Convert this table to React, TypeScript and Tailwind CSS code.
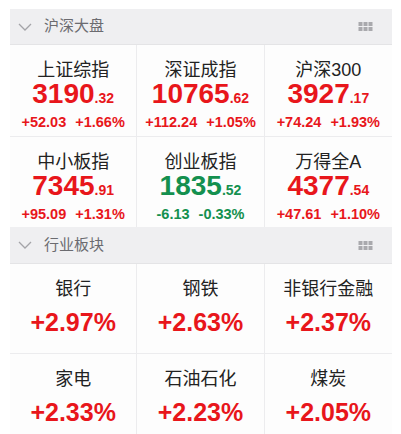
const font = "font-['Liberation_Sans','Noto_Sans_CJK_SC',sans-serif]"

type Index = { name: string; int: string; dec: string; chg: string; pct: string; up: boolean }

const indices: Index[] = [
  { name: '上证综指', int: '3190', dec: '.32', chg: '+52.03', pct: '+1.66%', up: true },
  { name: '深证成指', int: '10765', dec: '.62', chg: '+112.24', pct: '+1.05%', up: true },
  { name: '沪深300', int: '3927', dec: '.17', chg: '+74.24', pct: '+1.93%', up: true },
  { name: '中小板指', int: '7345', dec: '.91', chg: '+95.09', pct: '+1.31%', up: true },
  { name: '创业板指', int: '1835', dec: '.52', chg: '-6.13', pct: '-0.33%', up: false },
  { name: '万得全A', int: '4377', dec: '.54', chg: '+47.61', pct: '+1.10%', up: true },
]

const sectors = [
  { name: '银行', pct: '+2.97%' },
  { name: '钢铁', pct: '+2.63%' },
  { name: '非银行金融', pct: '+2.37%' },
  { name: '家电', pct: '+2.33%' },
  { name: '石油石化', pct: '+2.23%' },
  { name: '煤炭', pct: '+2.05%' },
]

function SectionHeader({ title, tall }: { title: string; tall?: boolean }) {
  return (
    <div className={`flex ${tall ? 'h-[37px]' : 'h-[36px]'} items-center border-b border-[#e4e4e6] bg-[#efeff1] pl-[8px] pr-[19px]`}>
      <svg width="14" height="8" viewBox="0 0 14 8" className="mr-[12px]">
        <polyline points="1,1 7,7 13,1" fill="none" stroke="#a4a4a8" strokeWidth="1.3" />
      </svg>
      <span className="text-[15px] text-[#6b6b70]">{title}</span>
      <svg width="15" height="9" viewBox="0 0 15 9" className="ml-auto">
        {[0, 5, 10].map((x) =>
          [0, 5].map((y) => <rect key={`${x}-${y}`} x={x + 0.5} y={y} width="4" height="4" fill="#a9a9ad" />)
        )}
      </svg>
    </div>
  )
}

export default function App() {
  return (
    <div className={`${font} h-[434px] w-[401px] overflow-hidden bg-white pl-[10px] pr-[9px] pt-[9px]`}>
      <SectionHeader title="沪深大盘" />
      <div className="grid grid-cols-3 bg-[#fdfdfd]">
        {indices.map((it, i) => (
          <div
            key={it.name}
            className={`flex flex-col items-center pt-[14px] ${i < 3 ? 'h-[92px] border-b' : 'h-[90px]'} border-[#ececee] ${i % 3 !== 2 ? 'border-r' : ''}`}
          >
            <div className="text-[18px] leading-[22px] text-[#222]">{it.name}</div>
            <div className={`-mt-[1px] flex items-baseline font-bold leading-[28px] ${it.up ? 'text-[#e8161b]' : 'text-[#14904f]'}`}>
              <span className="text-[28px]">{it.int}</span>
              <span className="text-[14px]">{it.dec}</span>
            </div>
            <div className={`mt-[1px] flex gap-[9px] text-[14.5px] font-bold leading-[18px] ${it.up ? 'text-[#e8161b]' : 'text-[#14904f]'}`}>
              <span>{it.chg}</span>
              <span>{it.pct}</span>
            </div>
          </div>
        ))}
      </div>
      <SectionHeader title="行业板块" tall />
      <div className="grid grid-cols-3 bg-[#fdfdfd]">
        {sectors.map((s, i) => (
          <div
            key={s.name}
            className={`flex h-[90px] flex-col items-center pt-[14px] ${i < 3 ? 'border-b' : ''} border-[#ececee] ${i % 3 !== 2 ? 'border-r' : ''}`}
          >
            <div className="text-[18px] leading-[22px] text-[#222]">{s.name}</div>
            <div className="mt-[7px] text-[25px] font-bold leading-[30px] text-[#e8161b]">{s.pct}</div>
          </div>
        ))}
      </div>
    </div>
  )
}
